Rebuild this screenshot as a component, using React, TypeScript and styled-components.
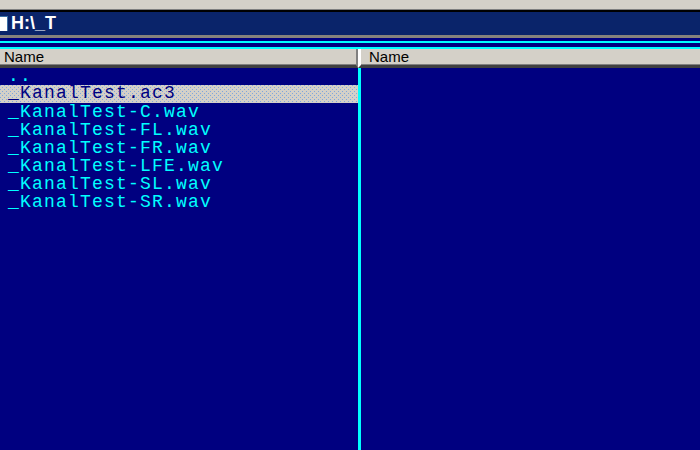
import React from 'react';
import styled, { createGlobalStyle } from 'styled-components';

const files = [
    '..',
    '_KanalTest.ac3',
    '_KanalTest-C.wav',
    '_KanalTest-FL.wav',
    '_KanalTest-FR.wav',
    '_KanalTest-LFE.wav',
    '_KanalTest-SL.wav',
    '_KanalTest-SR.wav',
];

const GlobalStyle = createGlobalStyle`
  html, body {
    margin: 0;
    padding: 0;
    overflow: hidden;
    background-color: #000080;
  }
`;

const Window = styled.div`
  width: 700px;
  height: 450px;
  display: flex;
  flex-direction: column;
  overflow: hidden;
`;

const MenuStrip = styled.div`
  height: 9px;
  flex: none;
  background-color: #d4d0c8;
  border-bottom: 1px solid #808080;
`;

const TitleBar = styled.div`
  height: 23px;
  flex: none;
  display: flex;
  align-items: center;
  gap: 3px;
  background-color: #0a246a;
  border-top: 2px solid #000;
  border-bottom: 3px solid #85827c;
`;

const DriveIcon = styled.span`
  width: 7px;
  height: 14px;
  background-color: #fff;
  border-top: 1px solid #3a6ea5;
  border-right: 1px solid #3a6ea5;
`;

const Path = styled.span`
  color: #fff;
  font-family: 'Liberation Sans', Arial, sans-serif;
  font-size: 18px;
  font-weight: bold;
  line-height: 25px;
`;

const PanelRule = styled.div`
  height: 8px;
  flex: none;
  box-sizing: border-box;
  background-color: #000080;
  border-top: 2px solid #00ffff;
  border-bottom: 2px solid #00ffff;
  margin-top: 3px;
`;

const Panels = styled.div`
  flex: 1;
  display: grid;
  grid-template-columns: 358px 1fr;
  min-height: 0;
`;

const Panel = styled.div`
  display: flex;
  flex-direction: column;
  min-width: 0;
  background-color: #000080;
`;

const HeaderCell = styled.div<{ $right?: boolean }>`
  height: 16px;
  flex: none;
  padding-left: ${(p) => (p.$right ? '8px' : '4px')};
  background-color: #d4d0c8;
  border-left: ${(p) => (p.$right ? '3px solid #fff' : 'none')};
  border-right: ${(p) => (p.$right ? 'none' : '2px solid #808080')};
  border-bottom: 3px solid #404040;
  box-shadow: inset 0 -1px 0 #808080;
  color: #000;
  font-family: 'Liberation Sans', Arial, sans-serif;
  font-size: 15px;
  line-height: 16px;
`;

const FileList = styled.ul<{ $right?: boolean }>`
  flex: 1;
  margin: 0;
  padding: 0;
  list-style: none;
  border-left: ${(p) => (p.$right ? '3px solid #00ffff' : 'none')};
`;

const FileRow = styled.li<{ $selected?: boolean }>`
  height: 18px;
  padding-left: 8px;
  color: ${(p) => (p.$selected ? '#000080' : '#00ffff')};
  background-color: ${(p) => (p.$selected ? '#d4d0c8' : 'transparent')};
  background-image: ${(p) =>
        p.$selected
            ? `conic-gradient(from 270deg at 1px 1px, #7fa6dd 25%, transparent 0),
               conic-gradient(from 270deg at 1px 1px, #7fa6dd 25%, transparent 0)`
            : 'none'};
  background-size: 4px 4px;
  background-position: 0 0, 2px 2px;
  font-family: 'Liberation Mono', 'Courier New', monospace;
  font-size: 18px;
  letter-spacing: 1.2px;
  line-height: ${(p) => (p.$selected ? '17px' : '19px')};
  white-space: pre;

  &:first-child {
    height: 17px;
    line-height: 17px;
  }
`;

const App: React.FC = () => {
    return (
        <Window>
            <GlobalStyle />
            <MenuStrip />
            <TitleBar>
                <DriveIcon />
                <Path>H:\_T</Path>
            </TitleBar>
            <PanelRule />
            <Panels>
                <Panel>
                    <HeaderCell>Name</HeaderCell>
                    <FileList>
                        {files.map((name) => (
                            <FileRow key={name} $selected={name === '_KanalTest.ac3'}>
                                {name}
                            </FileRow>
                        ))}
                    </FileList>
                </Panel>
                <Panel>
                    <HeaderCell $right>Name</HeaderCell>
                    <FileList $right />
                </Panel>
            </Panels>
        </Window>
    );
};

export default App;
